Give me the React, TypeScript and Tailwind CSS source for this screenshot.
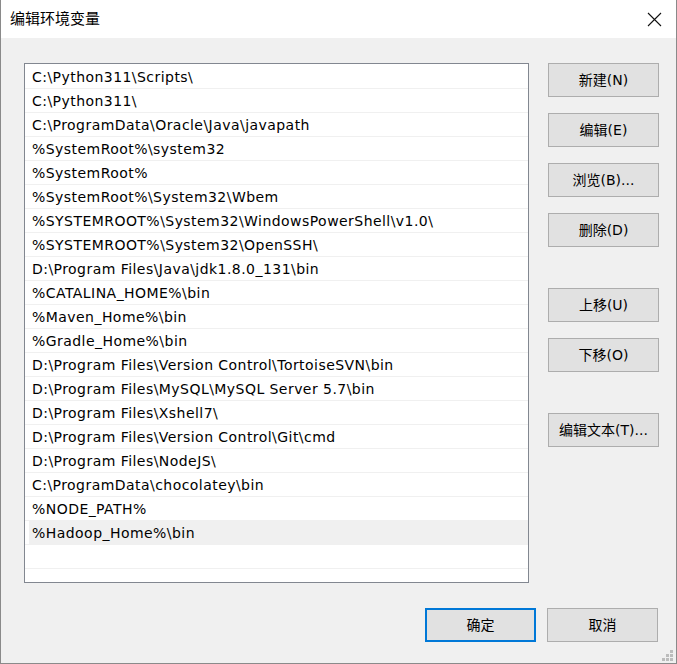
import React from "react";

const paths = [
  "C:\\Python311\\Scripts\\",
  "C:\\Python311\\",
  "C:\\ProgramData\\Oracle\\Java\\javapath",
  "%SystemRoot%\\system32",
  "%SystemRoot%",
  "%SystemRoot%\\System32\\Wbem",
  "%SYSTEMROOT%\\System32\\WindowsPowerShell\\v1.0\\",
  "%SYSTEMROOT%\\System32\\OpenSSH\\",
  "D:\\Program Files\\Java\\jdk1.8.0_131\\bin",
  "%CATALINA_HOME%\\bin",
  "%Maven_Home%\\bin",
  "%Gradle_Home%\\bin",
  "D:\\Program Files\\Version Control\\TortoiseSVN\\bin",
  "D:\\Program Files\\MySQL\\MySQL Server 5.7\\bin",
  "D:\\Program Files\\Xshell7\\",
  "D:\\Program Files\\Version Control\\Git\\cmd",
  "D:\\Program Files\\NodeJS\\",
  "C:\\ProgramData\\chocolatey\\bin",
  "%NODE_PATH%",
  "%Hadoop_Home%\\bin",
];

const font = "font-['DejaVu_Sans','Noto_Sans_CJK_SC',sans-serif]";

function WinButton({ label, primary = false }: { label: string; primary?: boolean }) {
  return (
    <button
      type="button"
      className={`h-[34px] w-[111px] bg-[#e1e1e1] text-[14px] text-black ${
        primary ? "border-2 border-[#0078d7]" : "border border-[#adadad]"
      }`}
    >
      {label}
    </button>
  );
}

export default function App() {
  const selected = paths.length - 1;

  return (
    <div className={`flex h-[664px] w-[677px] flex-col border-x border-b border-[#8a8a8a] bg-[#f0f0f0] ${font}`}>
      {/* 标题栏 */}
      <div className="flex h-[38px] items-center justify-between bg-white pl-[9px] pr-[14px]">
        <span className="text-[15px] text-black">编辑环境变量</span>
        <svg width="15" height="15" viewBox="0 0 15 15">
          <path d="M1 1 L14 14 M14 1 L1 14" stroke="#111" strokeWidth="1.1" fill="none" />
        </svg>
      </div>

      {/* 内容 */}
      <div className="flex flex-1 gap-[19px] pl-[23px] pt-[25px]">
        <div className="h-[520px] w-[505px] overflow-hidden border border-[#828790] bg-white pt-[1px]">
          {paths.map((p, i) => (
            <div key={i} className="h-[24px] border-b border-[#f0f0f0]">
              <div
                className={`ml-[4px] flex h-full items-center pl-[3px] pt-[2px] text-[14px] tracking-[0.45px] text-black ${
                  i === selected ? "bg-[#f0f0f0]" : ""
                }`}
              >
                {p}
              </div>
            </div>
          ))}
          <div className="h-[24px] border-b border-[#f0f0f0]" />
        </div>

        <div className="flex flex-col">
          <div className="flex flex-col gap-[16px]">
            <WinButton label="新建(N)" />
            <WinButton label="编辑(E)" />
            <WinButton label="浏览(B)..." />
            <WinButton label="删除(D)" />
          </div>
          <div className="mt-[41px] flex flex-col gap-[16px]">
            <WinButton label="上移(U)" />
            <WinButton label="下移(O)" />
          </div>
          <div className="mt-[41px]">
            <WinButton label="编辑文本(T)..." />
          </div>
        </div>
      </div>

      {/* 底部按钮 */}
      <div className="relative flex h-[55px] justify-end gap-[11px] pr-[18px]">
        <WinButton label="确定" primary />
        <WinButton label="取消" />
        <div className="absolute bottom-[2px] right-[3px] grid grid-cols-3 gap-[1px]">
          <span className="h-[3px] w-[3px]" />
          <span className="h-[3px] w-[3px]" />
          <span className="h-[3px] w-[3px] bg-[#bcbcbc]" />
          <span className="h-[3px] w-[3px]" />
          <span className="h-[3px] w-[3px] bg-[#bcbcbc]" />
          <span className="h-[3px] w-[3px] bg-[#bcbcbc]" />
          <span className="h-[3px] w-[3px] bg-[#bcbcbc]" />
          <span className="h-[3px] w-[3px] bg-[#bcbcbc]" />
          <span className="h-[3px] w-[3px] bg-[#bcbcbc]" />
        </div>
      </div>
    </div>
  );
}
